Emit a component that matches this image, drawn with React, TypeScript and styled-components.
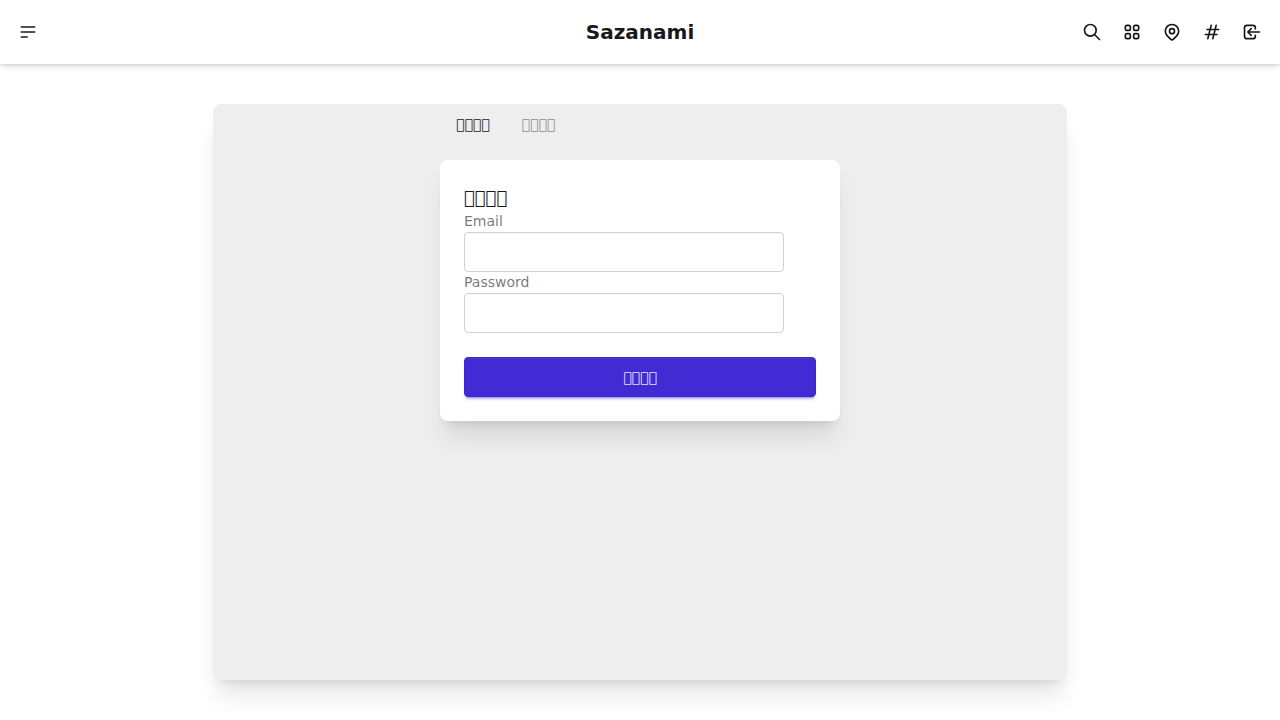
import React, { useState } from "react";
import styled, { createGlobalStyle } from "styled-components";
import {
  HiOutlineHashtag,
  HiOutlineLocationMarker,
  HiOutlineLogin,
  HiOutlineMenuAlt2,
  HiOutlineSearch,
  HiOutlineViewGrid,
} from "react-icons/hi";

const GlobalStyle = createGlobalStyle`
  *, *::before, *::after { box-sizing: border-box; }
  body {
    margin: 0;
    background: #ffffff;
    color: #18181b;
    font-family: "DejaVu Sans", sans-serif;
    font-size: 16px;
    line-height: 1.5;
  }
  button, input { font: inherit; color: inherit; }
`;

const Navbar = styled.header`
  display: flex;
  align-items: center;
  min-height: 64px;
  padding: 8px;
  background: #ffffff;
  box-shadow: 0 1px 3px rgba(0, 0, 0, 0.1), 0 4px 6px -1px rgba(0, 0, 0, 0.1);
`;

const NavSide = styled.div<{ $end?: boolean }>`
  display: flex;
  flex: 1;
  justify-content: ${(p) => (p.$end ? "flex-end" : "flex-start")};
`;

const IconButton = styled.button`
  display: flex;
  align-items: center;
  justify-content: center;
  width: 40px;
  height: 40px;
  padding: 0;
  border: 0;
  border-radius: 50%;
  background: transparent;
  cursor: pointer;

  svg {
    width: 20px;
    height: 20px;
  }

  &:hover {
    background: #eeeeee;
  }
`;

const Brand = styled.a`
  color: inherit;
  font-size: 20px;
  font-weight: 700;
  line-height: 28px;
  text-decoration: none;
`;

const Panel = styled.main`
  display: flex;
  flex-direction: column;
  align-items: center;
  width: 66.6667%;
  min-height: 80vh;
  margin: 40px auto;
  border-radius: 8px;
  background: #eeeeee;
  box-shadow: 0 20px 25px -5px rgba(0, 0, 0, 0.1), 0 8px 10px -6px rgba(0, 0, 0, 0.1);
`;

const FormColumn = styled.div`
  display: flex;
  flex-direction: column;
  gap: 16px;
  width: 100%;
  max-width: 400px;
`;

const TabList = styled.div`
  display: flex;
`;

const Tab = styled.button<{ $active: boolean }>`
  height: 40px;
  padding: 0 16px;
  border: 0;
  background: transparent;
  color: ${(p) => (p.$active ? "#18181b" : "rgba(24, 24, 27, 0.5)")};
  font-size: 14px;
  cursor: pointer;
`;

const Card = styled.form`
  display: flex;
  flex-direction: column;
  padding: 24px;
  border-radius: 8px;
  background: #ffffff;
  box-shadow: 0 20px 25px -5px rgba(0, 0, 0, 0.1), 0 8px 10px -6px rgba(0, 0, 0, 0.1);
`;

const CardTitle = styled.h2`
  margin: 0;
  font-size: 18px;
  font-weight: 400;
  line-height: 27px;
`;

const Label = styled.label`
  color: rgba(24, 24, 27, 0.6);
  font-size: 14px;
  line-height: 21px;
`;

const TextInput = styled.input`
  width: 100%;
  max-width: 320px;
  height: 40px;
  padding: 0 12px;
  border: 1px solid #d1d1d1;
  border-radius: 4px;
  background: #ffffff;
  font-size: 14px;
  box-shadow: inset 0 1px rgba(0, 0, 0, 0.02);
`;

const SubmitButton = styled.button`
  height: 40px;
  margin-top: 24px;
  border: 1px solid #3d27ca;
  border-radius: 4px;
  background: #422ad5;
  color: #e0e7ff;
  font-size: 14px;
  box-shadow: inset 0 1px rgba(255, 255, 255, 0.06), 0 3px 2px -2px rgba(66, 42, 213, 0.3),
    0 4px 3px -2px rgba(66, 42, 213, 0.3);
  cursor: pointer;
`;

const LOGIN = "\uE800\uE801\uE802\uE803";
const REGISTER = "\uE804\uE805\uE806\uE807";

const actions = [
  { name: "Search", Icon: HiOutlineSearch },
  { name: "Categories", Icon: HiOutlineViewGrid },
  { name: "Places", Icon: HiOutlineLocationMarker },
  { name: "Tags", Icon: HiOutlineHashtag },
  { name: "Log in", Icon: HiOutlineLogin },
];

export default function App() {
  const [tab, setTab] = useState(LOGIN);

  return (
    <>
      <GlobalStyle />
      <Navbar>
        <NavSide>
          <IconButton type="button" aria-label="Menu">
            <HiOutlineMenuAlt2 />
          </IconButton>
        </NavSide>
        <Brand href="#">Sazanami</Brand>
        <NavSide $end>
          {actions.map(({ name, Icon }) => (
            <IconButton key={name} type="button" aria-label={name}>
              <Icon />
            </IconButton>
          ))}
        </NavSide>
      </Navbar>
      <Panel>
        <FormColumn>
          <TabList role="tablist">
            {[LOGIN, REGISTER].map((name) => (
              <Tab
                key={name}
                type="button"
                role="tab"
                aria-selected={tab === name}
                $active={tab === name}
                onClick={() => setTab(name)}
              >
                {name}
              </Tab>
            ))}
          </TabList>
          <Card onSubmit={(e) => e.preventDefault()}>
            <CardTitle>{tab}</CardTitle>
            <Label htmlFor="email">Email</Label>
            <TextInput id="email" type="email" autoComplete="email" />
            <Label htmlFor="password">Password</Label>
            <TextInput id="password" type="password" autoComplete="current-password" />
            <SubmitButton type="submit">{tab}</SubmitButton>
          </Card>
        </FormColumn>
      </Panel>
    </>
  );
}
